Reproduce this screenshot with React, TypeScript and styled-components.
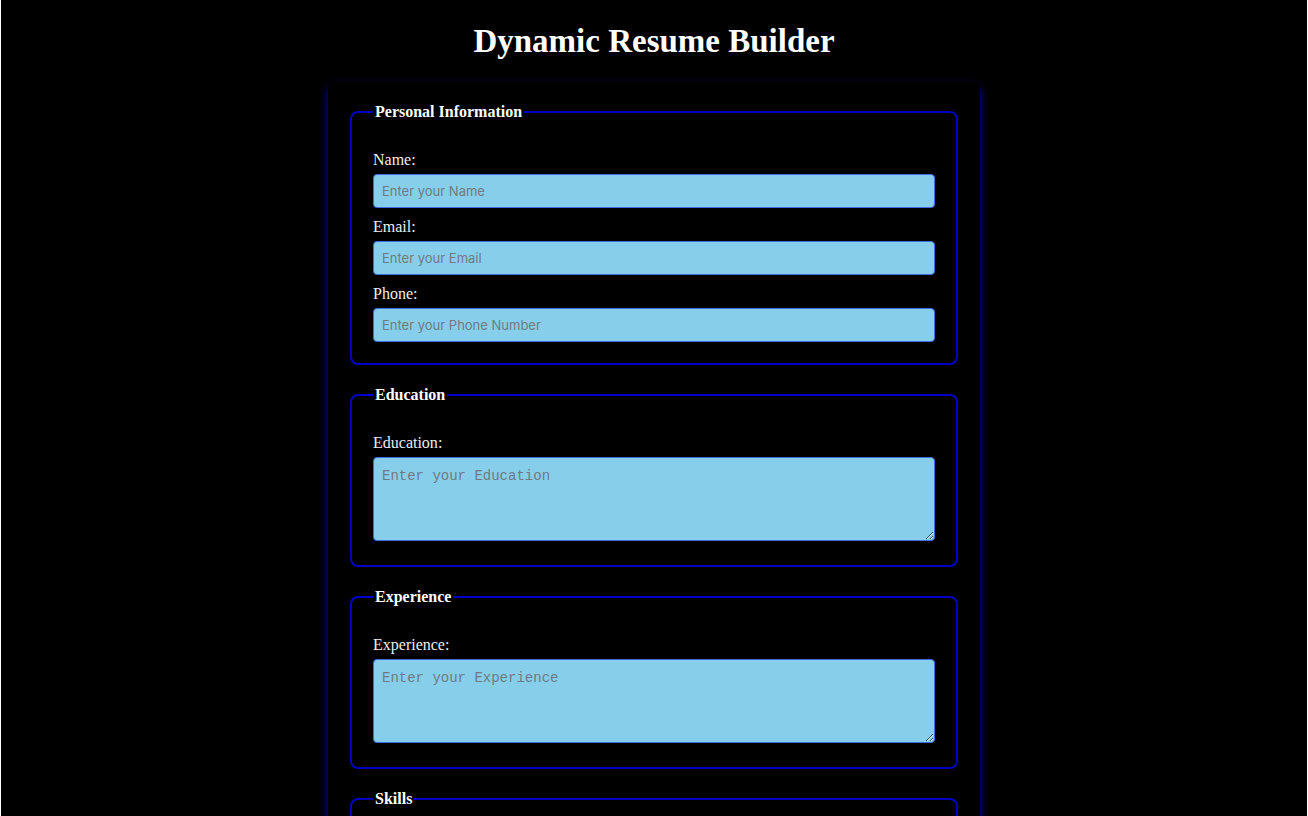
import React from "react";
import styled, { createGlobalStyle, css } from "styled-components";

const GlobalStyle = createGlobalStyle`
  * { box-sizing: border-box; }
  html {
    background: #000;
    scrollbar-width: none;
  }
  body {
    margin: 0;
    background: #000;
    color: #fff;
    font-family: "Liberation Serif", "Times New Roman", serif;
    font-size: 16px;
    line-height: 18px;
  }
`;

const Page = styled.main`
  min-height: 100vh;
  padding: 22px 20px;
  border: 0 solid #fff;
  border-width: 0 1px;
`;

const Title = styled.h1`
  margin: 0 0 21px;
  text-align: center;
  font-size: 33px;
  line-height: 38px;
`;

const Form = styled.form`
  max-width: 652px;
  margin: 0 auto;
  padding: 22px;
  border-radius: 8px;
  box-shadow: 0 5px 8px #0000cd;
  background: #000;
`;

const Section = styled.fieldset`
  min-width: 0;
  margin: 0 0 21px;
  padding: 30px 21px 21px;
  border: 2px solid #0000c4;
  border-radius: 8px;
`;

const Legend = styled.legend`
  padding: 0 2px;
  font-weight: bold;
`;

const Field = styled.div`
  & + & { margin-top: 10px; }
`;

const Label = styled.label`
  display: block;
  margin-bottom: 5px;
  color: #eee;
`;

const control = css`
  display: block;
  width: 100%;
  padding: 8px;
  border: 1px solid #4169e1;
  border-radius: 4px;
  background: skyblue;
  color: #000;
  &::placeholder { color: #6f7b82; }
`;

const TextInput = styled.input`
  ${control}
  height: 34px;
  font: 13px Inter, sans-serif;
`;

const TextArea = styled.textarea`
  ${control}
  height: 84px;
  margin-bottom: 3px;
  padding-top: 10px;
  font: 14px "Liberation Mono", monospace;
  resize: vertical;
`;

const contacts = [
  { id: "name", label: "Name", type: "text", hint: "Enter your Name" },
  { id: "email", label: "Email", type: "email", hint: "Enter your Email" },
  { id: "phone", label: "Phone", type: "tel", hint: "Enter your Phone Number" },
];

const topics = ["Education", "Experience", "Skills"];

export default function App() {
  return (
    <>
      <GlobalStyle />
      <Page>
        <Title>Dynamic Resume Builder</Title>
        <Form>
          <Section>
            <Legend>Personal Information</Legend>
            {contacts.map((c) => (
              <Field key={c.id}>
                <Label htmlFor={c.id}>{c.label}:</Label>
                <TextInput id={c.id} type={c.type} placeholder={c.hint} />
              </Field>
            ))}
          </Section>
          {topics.map((topic) => (
            <Section key={topic}>
              <Legend>{topic}</Legend>
              <Field>
                <Label htmlFor={topic}>{topic}:</Label>
                <TextArea id={topic} placeholder={`Enter your ${topic}`} />
              </Field>
            </Section>
          ))}
        </Form>
      </Page>
    </>
  );
}
